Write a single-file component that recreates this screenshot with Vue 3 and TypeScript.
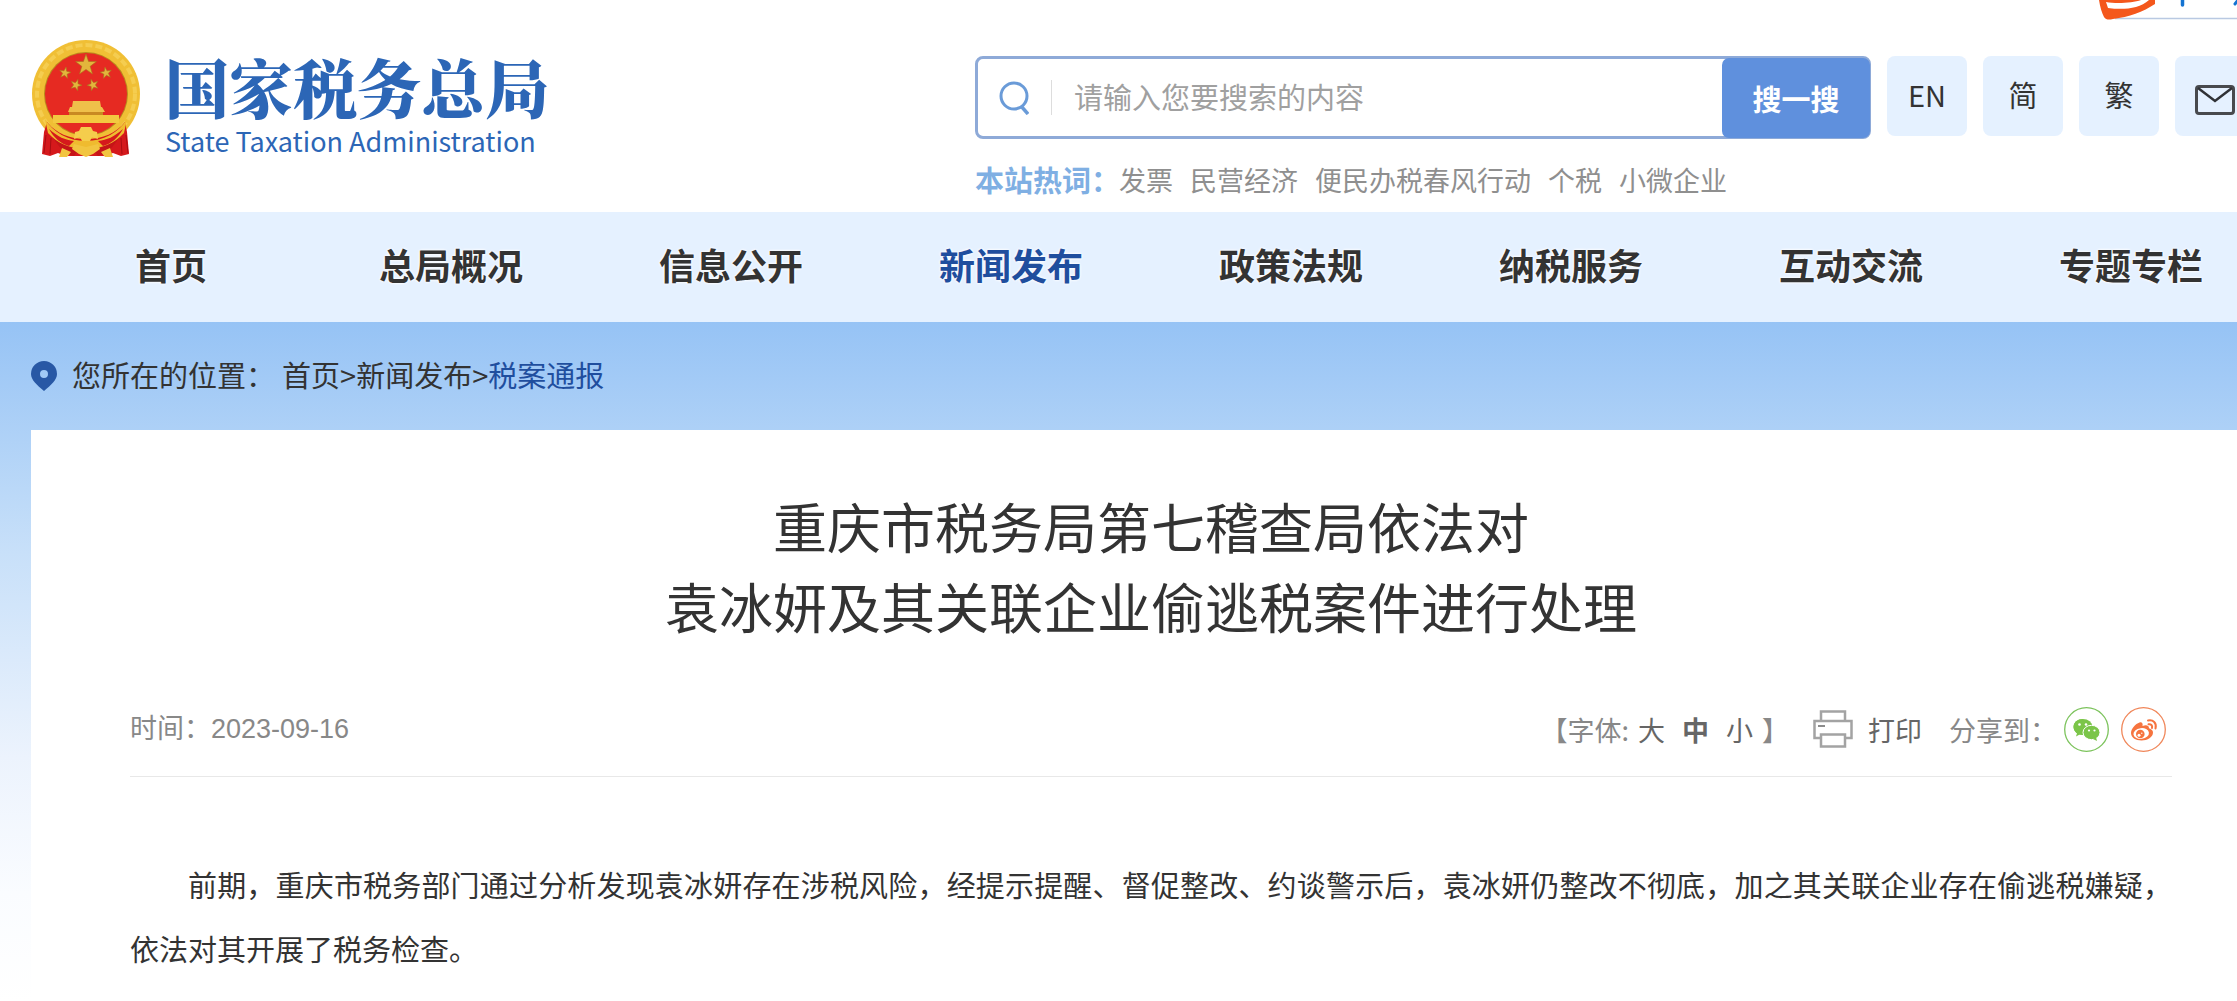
<script setup lang="ts">
import { ref } from 'vue'

interface Star { cx: number; cy: number; r: number; turn: number }

const keyword = ref('')
const hotWords: string[] = ['发票', '民营经济', '便民办税春风行动', '个税', '小微企业']
const languages: string[] = ['EN', '简', '繁']
const navItems: string[] = ['首页', '总局概况', '信息公开', '新闻发布', '政策法规', '纳税服务', '互动交流', '专题专栏']
const activeNav = '新闻发布'
const fontSizes: string[] = ['大', '中', '小']
const fontSize = ref('中')

const stars: Star[] = [
  { cx: 55, cy: 25, r: 11, turn: 0 },
  { cx: 34, cy: 33, r: 6, turn: 10 },
  { cx: 75, cy: 33, r: 6, turn: -10 },
  { cx: 45, cy: 45, r: 6, turn: 20 },
  { cx: 62, cy: 45, r: 6, turn: -20 },
]

function starPoints(star: Star): string {
  const points: string[] = []
  for (let i = 0; i < 10; i++) {
    const radius = i % 2 === 0 ? star.r : star.r * 0.4
    const angle = ((i * 36 + star.turn - 90) * Math.PI) / 180
    points.push(`${(star.cx + radius * Math.cos(angle)).toFixed(2)},${(star.cy + radius * Math.sin(angle)).toFixed(2)}`)
  }
  return points.join(' ')
}
</script>

<template>
  <div class="page">
    <header class="header">
      <a class="brand" href="#">
        <svg class="emblem" viewBox="0 0 110 118" aria-hidden="true">
          <circle cx="55" cy="54" r="54" fill="#f0bf35" />
          <circle cx="55" cy="54" r="49" fill="none" stroke="#f5cd50" stroke-width="4" stroke-dasharray="7 3" />
          <circle cx="55" cy="54" r="42" fill="#b98a1c" />
          <circle cx="55" cy="54" r="41" fill="#e62a22" />
          <polygon v-for="star in stars" :key="`${star.cx}-${star.cy}`" :points="starPoints(star)" fill="#e3b53c" stroke="#a8701c" stroke-width="0.6" />
          <path d="M42 61h27l1 6h-29z M39 67h32l3 5H37z" fill="#efc04a" />
          <path d="M38 72h34v3H38z" fill="#c98a22" />
          <path d="M22 75h66v8H22z" fill="#f3c840" />
          <path d="M16 82c9 11 22 17 39 17s30-6 39-17l2 10 2 22-8 2-8-3-9 3H35l-8-3-8 3-8-2 2-22z" fill="#d5191c" />
          <path d="M16 82c7 14 21 23 35 23l-8 11c-9-2-21-12-27-34zM94 82c-7 14-21 23-35 23l8 11c9-2 21-12 27-34z" fill="#b60f14" opacity="0.5" />
          <path d="M14 79c8 13 23 22 41 22s33-9 41-22l-3 14c-9 10-22 16-38 16s-29-6-38-16z" fill="#efbb2f" />
          <path d="M18 89c9 8 16 11 25 12l-5 5c-8-2-15-8-20-17zM92 89c-9 8-16 11-25 12l5 5c8-2 15-8 20-17z" fill="#d5191c" />
          <path d="M43 99l1-7 4-1 2-4h10l2 4 4 1 1 7-6-2-2 4h-8l-2-4z" fill="#f5cd4c" />
          <path d="M43 104l12 3 12-3 2 5-7 5-7 3-7-3-7-5z" fill="#f2c540" />
          <path d="M31 108l9 4-4 5h-8zM79 108l-9 4 4 5h8z" fill="#f2c540" />
          <path d="M15 95l-2 18M20 98l-1 16M95 95l2 18M90 98l1 16" stroke="#a90d12" stroke-width="1" fill="none" />
        </svg>
        <span class="brand-text">
          <span class="brand-cn">国家税务总局</span>
          <span class="brand-en">State Taxation Administration</span>
        </span>
      </a>

      <div class="search-area">
        <form class="search" @submit.prevent>
          <label class="search-label" for="keyword" aria-label="搜索">
            <svg viewBox="0 0 30 34" aria-hidden="true">
              <circle cx="15" cy="15" r="13" fill="none" stroke="#6a9bd8" stroke-width="3" />
              <path d="M22 25l7 8" stroke="#6a9bd8" stroke-width="3.5" />
            </svg>
          </label>
          <input id="keyword" v-model="keyword" type="text" placeholder="请输入您要搜索的内容" />
          <button type="submit">搜一搜</button>
        </form>
        <div class="hot">
          <span class="hot-label">本站热词：</span>
          <a v-for="word in hotWords" :key="word" href="#">{{ word }}</a>
        </div>
      </div>

      <div class="tiles">
        <a v-for="language in languages" :key="language" class="tile" href="#">{{ language }}</a>
        <a class="tile" href="#" aria-label="邮箱">
          <svg class="mail" viewBox="0 0 40 30" aria-hidden="true">
            <rect x="1.5" y="1.5" width="37" height="27" rx="2.5" fill="none" stroke="#484a4e" stroke-width="3" />
            <path d="M3 3l17 13L37 3" fill="none" stroke="#303236" stroke-width="2.5" />
          </svg>
        </a>
      </div>

      <svg class="ime" viewBox="0 0 140 22" aria-hidden="true">
        <path d="M16 18.500H140" stroke="#b9c9e2" stroke-width="1.500" />
        <path d="M0 0c1 7 3 13 5 17 2 3 5 3 9 2 16-2 30-7 42-15v-4z" fill="#f4571c" />
        <path d="M7 2c10 2 27 1 35-2h8C40 9 24 10 9 8z" fill="#fff" />
        <path d="M83.500 0v5" stroke="#1473d2" stroke-width="3.500" stroke-linecap="round" />
        <path d="M136 4l3-4" stroke="#1473d2" stroke-width="3" stroke-linecap="round" />
      </svg>
    </header>

    <nav class="nav">
      <a v-for="item in navItems" :key="item" href="#" :class="{ active: item === activeNav }">{{ item }}</a>
    </nav>

    <main class="main">
      <div class="crumbs">
        <svg class="pin" viewBox="0 0 26 30" aria-hidden="true">
          <path fill-rule="evenodd" d="M13 0a13 13 0 0 1 13 13c0 6-6 11-13 17C6 24 0 19 0 13A13 13 0 0 1 13 0zm0 9a4 4 0 1 0 0 8 4 4 0 0 0 0-8z" fill="#2858a5" />
        </svg>
        <div class="crumb-trail">
          <span class="crumbs-label">您所在的位置：</span>
          <a href="#">首页</a><span>&gt;</span><a href="#">新闻发布</a><span>&gt;</span><a href="#" class="current">税案通报</a>
        </div>
      </div>

      <article class="panel">
        <h1>重庆市税务局第七稽查局依法对<br />袁冰妍及其关联企业偷逃税案件进行处理</h1>

        <div class="meta">
          <div class="date">时间：<time datetime="2023-09-16">2023-09-16</time></div>
          <div class="tools">
            <span class="sizes">
              <span>【字体:</span>
              <span class="size-options">
                <button v-for="size in fontSizes" :key="size" type="button" :class="{ chosen: size === fontSize }" @click="fontSize = size">{{ size }}</button>
              </span>
              <span>】</span>
            </span>
            <button class="print" type="button">
              <svg viewBox="0 0 40 38" aria-hidden="true">
                <g fill="#fff" stroke="#a3a3a3" stroke-width="2.5">
                  <rect x="8" y="1.500" width="24" height="12" />
                  <rect x="1.500" y="11" width="37" height="17" />
                  <rect x="8" y="24.500" width="24" height="12" />
                </g>
                <path d="M5 16h7" stroke="#8c8c8c" stroke-width="2" />
              </svg>
              打印
            </button>
            <span class="share">
              <span>分享到：</span>
              <a href="#" aria-label="微信">
                <svg viewBox="0 0 45 45" aria-hidden="true">
                  <circle cx="22.500" cy="22.500" r="21.800" fill="#fff" stroke="#7cc35c" stroke-width="1.300" />
                  <path d="M19 12c-5.500 0-9.500 3.500-9.500 8 0 2.600 1.400 4.700 3.500 6.200l-1 3.300 3.700-2c1 .3 2.200.5 3.300.5z" fill="#7bc549" />
                  <ellipse cx="19" cy="20" rx="9.500" ry="8" fill="#7bc549" />
                  <ellipse cx="27.500" cy="25.500" rx="8.500" ry="7.200" fill="#7bc549" stroke="#fff" stroke-width="1" />
                  <path d="M29 32l4 2-1-4z" fill="#7bc549" />
                  <g fill="#fff"><circle cx="15.500" cy="17.500" r="1.300" /><circle cx="22" cy="17.500" r="1.300" /><circle cx="25" cy="23.500" r="1.100" /><circle cx="30.500" cy="23.500" r="1.100" /></g>
                </svg>
              </a>
              <a href="#" aria-label="微博">
                <svg viewBox="0 0 45 45" aria-hidden="true">
                  <circle cx="22.500" cy="22.500" r="21.800" fill="#fff" stroke="#f0875a" stroke-width="1.300" />
                  <path d="M18.500 15.500c2-.7 3.700.5 3 3.500 3-1.200 6.500-1.200 6.500 2.200 2.500.8 4 2.200 4 4.300 0 4.500-5.500 8-11.500 8s-10.500-3-10.500-7.500c0-4 4.500-9.300 8.500-10.500z" fill="#f6743f" />
                  <ellipse cx="20.200" cy="26.500" rx="7.800" ry="5.400" fill="#fff" transform="rotate(-8 20.200 26.500)" />
                  <circle cx="19.300" cy="27" r="4.300" fill="#f6743f" />
                  <circle cx="18" cy="28.300" r="1.500" fill="#fff" />
                  <circle cx="20.800" cy="26.200" r=".7" fill="#fff" />
                  <path d="M27 13.500c5-1.200 9 2.500 7.500 8M27.500 17.300c2.500-.5 4.200 1 3.500 3.700" fill="none" stroke="#f6743f" stroke-width="2" stroke-linecap="round" />
                </svg>
              </a>
            </span>
          </div>
        </div>

        <p class="body">前期，重庆市税务部门通过分析发现袁冰妍存在涉税风险，经提示提醒、督促整改、约谈警示后，袁冰妍仍整改不彻底，加之其关联企业存在偷逃税嫌疑，依法对其开展了税务检查。</p>
      </article>
    </main>
  </div>
</template>

<style>
body {
  margin: 0;
  background: #fff;
}
</style>

<style scoped>
.page {
  display: flex;
  flex-direction: column;
  min-height: 100vh;
  overflow: hidden;
  color: #333;
  font-family: "Noto Sans CJK SC", "Noto Sans", sans-serif;
  font-size: 29px;
}

a {
  color: inherit;
  text-decoration: none;
}

button {
  padding: 0;
  border: 0;
  background: none;
  color: inherit;
  font: inherit;
  cursor: pointer;
}

svg {
  display: block;
}

.header {
  position: relative;
  display: flex;
  align-items: flex-start;
  box-sizing: border-box;
  height: 212px;
  padding-left: 31px;
  overflow: hidden;
}

.brand {
  display: flex;
  flex: 0 0 944px;
  gap: 24px;
  padding-top: 40px;
}

.emblem {
  width: 110px;
  height: 118px;
}

.brand-text {
  display: flex;
  flex-direction: column;
  padding-top: 8px;
  color: #2c66b6;
}

.brand-cn {
  font-family: "Noto Serif CJK SC", "Noto Sans CJK SC", serif;
  font-size: 64px;
  font-weight: 900;
  line-height: 74px;
}

.brand-en {
  font-size: 27px;
  font-weight: 400;
  line-height: 38px;
}

.search-area {
  flex: 0 0 896px;
  padding-top: 56px;
}

.search {
  display: flex;
  box-sizing: border-box;
  height: 83px;
  border: 3px solid #8eaad8;
  border-radius: 8px;
  background: #fff;
}

.search-label {
  display: flex;
  align-items: center;
  padding: 0 22px 0 21px;
}

.search-label svg {
  width: 30px;
  height: 34px;
}

.search input {
  flex: 1;
  min-width: 0;
  padding: 0 0 4px 23px;
  border: 0;
  outline: 0;
  background: linear-gradient(#ddd, #ddd) left center / 1px 35px no-repeat;
  color: #333;
  font: inherit;
}

.search input::placeholder {
  color: #a0a0a0;
  opacity: 1;
}

.search button {
  width: 148px;
  margin: -1px -2px -2px 0;
  border-radius: 7px;
  background: #5f90dd;
  color: #fff;
  font-weight: 700;
}

.hot {
  display: flex;
  align-items: center;
  gap: 17px;
  height: 80px;
  color: #8f8f8f;
  font-size: 27px;
}

.hot-label {
  margin-right: -18px;
  color: #7fafe3;
  font-size: 29px;
  font-weight: 700;
}

.tiles {
  display: flex;
  gap: 16px;
  padding: 56px 0 0 16px;
}

.tile {
  display: flex;
  flex: 0 0 80px;
  align-items: center;
  justify-content: center;
  box-sizing: border-box;
  height: 80px;
  padding-bottom: 4px;
  border-radius: 8px;
  background: #e5f1ff;
}

.mail {
  width: 40px;
  height: 30px;
  padding-top: 12px;
}

.ime {
  position: absolute;
  top: 0;
  right: -2px;
  width: 140px;
  height: 22px;
}

.nav {
  display: flex;
  height: 110px;
  padding-left: 31px;
  overflow: hidden;
  background: #e5f1ff;
  font-size: 36px;
  font-weight: 700;
  line-height: 104px;
  text-align: center;
  text-shadow: 0 0 3px #fff, 0 0 3px #fff;
}

.nav a {
  flex: 0 0 280px;
}

.nav .active {
  color: #1f4e9e;
}

.main {
  display: flex;
  flex: 1;
  flex-direction: column;
  padding-left: 31px;
  background: linear-gradient(#96c3f5, #c8e0f9 34%, #ecf3fd 64%, #fafcff 84%, #fff) 0 0 / 100% 680px no-repeat;
}

.crumbs {
  display: flex;
  align-items: center;
  gap: 15px;
  height: 108px;
}

.pin {
  width: 26px;
  height: 30px;
}

.crumb-trail {
  display: flex;
  padding-bottom: 4px;
}

.crumbs-label {
  margin-right: 7px;
}

.current {
  color: #1f4e9e;
}

.panel {
  flex: 1;
  padding: 56px 65px 16px 99px;
  background: #fff;
}

h1 {
  margin: 0;
  font-size: 54px;
  font-weight: 400;
  line-height: 80px;
  text-align: center;
}

.meta {
  display: flex;
  align-items: center;
  justify-content: space-between;
  height: 90px;
  margin-top: 38px;
  padding-bottom: 2px;
  border-bottom: 1px solid #e8e8e8;
  color: #888;
  font-size: 27px;
}

.date {
  padding-bottom: 6px;
}

.date time {
  font-family: "Liberation Sans", sans-serif;
}

.tools,
.sizes,
.size-options,
.print,
.share {
  display: flex;
  align-items: center;
}

.tools {
  padding-right: 6px;
}

.sizes {
  gap: 9px;
  margin-right: 24px;
}

.size-options {
  gap: 17px;
  color: #666;
}

.chosen {
  font-weight: 700;
}

.print {
  gap: 15px;
  margin-right: 27px;
  color: #666;
}

.print svg {
  width: 40px;
  height: 38px;
}

.share a {
  margin-right: 12px;
}

.share a:last-child {
  margin-right: 0;
}

.share span {
  margin-right: 7px;
}

.share svg {
  width: 45px;
  height: 45px;
}

.body {
  margin: 75px 0 0;
  line-height: 64px;
  text-align: justify;
  text-indent: 2em;
}
</style>
